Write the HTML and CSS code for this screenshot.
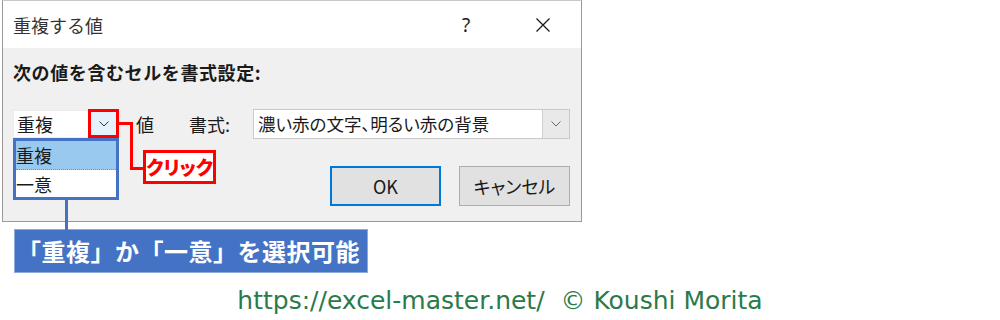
FILE: index.html
```html
<!DOCTYPE html>
<html lang="ja">
<head>
<meta charset="utf-8">
<title>重複する値</title>
<link rel="stylesheet" href="styles.css">
</head>
<body>
<div class="page">
  <div class="dialog">
    <div class="titlebar">
      <span class="title">重複する値</span>
      <span class="help">?</span>
      <span class="close">
        <svg width="16" height="16" viewBox="0 0 16 16"><path d="M1.5 1.5 L14.5 14.5 M14.5 1.5 L1.5 14.5" stroke="#1a1a1a" stroke-width="1.3" fill="none"/></svg>
      </span>
    </div>
    <div class="content">
      <div class="heading">次の値を含むセルを書式設定:</div>
      <div class="row">
        <div class="combo">
          <span class="combo-text">重複</span>
          <span class="combo-btn">
            <svg width="10" height="6" viewBox="0 0 10 6"><path d="M0.5 0.5 L5 5 L9.5 0.5" stroke="#333" stroke-width="1" fill="none"/></svg>
          </span>
        </div>
        <span class="lbl-val">値</span>
        <span class="lbl-fmt">書式:</span>
        <div class="fmt-combo">
          <span class="fmt-text">濃い赤の文字、明るい赤の背景</span>
          <span class="fmt-btn">
            <svg width="10" height="6" viewBox="0 0 10 6"><path d="M0.5 0.5 L5 5 L9.5 0.5" stroke="#666" stroke-width="1" fill="none"/></svg>
          </span>
        </div>
      </div>
      <div class="buttons">
        <button class="btn btn-ok">OK</button>
        <button class="btn">キャンセル</button>
      </div>
    </div>
  </div>

  <div class="callout">「重複」か「一意」を選択可能</div>

  <div class="footer">https://excel-master.net/&nbsp; © Koushi Morita</div>

  <!-- annotations over the dialog -->
  <div class="droplist">
    <div class="item item-sel">重複</div>
    <div class="item">一意</div>
  </div>
  <div class="redbox"></div>
  <div class="red-h1"></div>
  <div class="red-v"></div>
  <div class="red-h2"></div>
  <div class="click-tag">クリック</div>
  <div class="blue-v"></div>
</div>
</body>
</html>
```

FILE: styles.css
```css
html, body {
  margin: 0;
  padding: 0;
  background: #ffffff;
}
body {
  width: 1000px;
  height: 320px;
  overflow: hidden;
  font-family: "Noto Sans CJK JP", "Noto Sans", sans-serif;
}
.page {
  position: relative;
  width: 1000px;
  height: 320px;
}
.dialog {
  margin-left: 2px;
  width: 580px;
  height: 222px;
  box-sizing: border-box;
  border: 1px solid #9a9a9a;
  border-top-color: #c8c8c8;
  display: flex;
  flex-direction: column;
  background: #f0f0f0;
}
.titlebar {
  height: 47px;
  background: #ffffff;
  display: flex;
  align-items: center;
  padding-left: 10px;
  padding-right: 15px;
  color: #1a1a1a;
}
.title {
  font-size: 18px;
  color: #333;
}
.help {
  margin-left: auto;
  width: 40px;
  text-align: center;
  font-family: "Noto Sans", sans-serif;
  font-size: 19px;
  color: #1a1a1a;
}
.close {
  margin-left: 34px;
  width: 46px;
  display: flex;
  justify-content: center;
  align-items: center;
}
.content {
  flex: 1;
  padding: 14px 11px 0 10px;
}
.heading {
  font-size: 18px;
  font-weight: bold;
  line-height: 20px;
  letter-spacing: 0.6px;
  color: #1a1a1a;
}
.row {
  margin-top: 27px;
  height: 29px;
  display: flex;
  align-items: center;
  font-size: 18px;
  color: #1a1a1a;
}
.combo {
  width: 107px;
  height: 28px;
  box-sizing: border-box;
  background: #ffffff;
  border: 1px solid #ececec;
  display: flex;
  align-items: center;
}
.combo-text {
  padding-left: 3px;
  line-height: 26px;
}
.combo-btn {
  margin-left: auto;
  width: 30px;
  height: 26px;
  background: #e5f1fb;
  display: flex;
  align-items: center;
  justify-content: center;
}
.lbl-val {
  margin-left: 16px;
}
.lbl-fmt {
  margin-left: 35px;
}
.fmt-combo {
  margin-left: auto;
  width: 317px;
  height: 30px;
  box-sizing: border-box;
  background: #ffffff;
  border: 1px solid #c9c9c9;
  display: flex;
  align-items: center;
}
.fmt-text {
  padding-left: 4px;
  font-size: 17.5px;
  font-feature-settings: "palt";
}
.fmt-btn {
  margin-left: auto;
  width: 27px;
  height: 28px;
  box-sizing: border-box;
  background: #e9e9e9;
  border-left: 1px solid #d0d0d0;
  display: flex;
  align-items: center;
  justify-content: center;
}
.buttons {
  margin-top: 28px;
  display: flex;
  justify-content: flex-end;
  gap: 18px;
}
.btn {
  width: 111px;
  height: 40px;
  box-sizing: border-box;
  background: #e1e1e1;
  border: 1px solid #adadad;
  font-family: "Noto Sans CJK JP", "Noto Sans", sans-serif;
  font-size: 18px;
  color: #1a1a1a;
  padding: 0;
  font-feature-settings: "palt";
}
.btn-ok {
  border: 2px solid #0078d7;
}
.callout {
  margin-top: 7px;
  margin-left: 14px;
  width: 354px;
  height: 44px;
  box-sizing: border-box;
  background: #4472c4;
  border: 1px solid #8fa9dc;
  color: #ffffff;
  font-size: 24px;
  font-weight: bold;
  line-height: 42px;
  padding-left: 2px;
  letter-spacing: 0.5px;
  white-space: nowrap;
}
.footer {
  margin-top: 14px;
  text-align: center;
  font-family: "DejaVu Sans", sans-serif;
  font-size: 25px;
  line-height: 28px;
  color: #2b7a4b;
}

/* annotations */
.droplist {
  position: absolute;
  left: 13px;
  top: 138px;
  width: 106px;
  height: 62px;
  box-sizing: border-box;
  border: 3px solid #4472c4;
  background: #ffffff;
  font-size: 18px;
  color: #1a1a1a;
}
.item {
  height: 28px;
  line-height: 28px;
  padding-left: 0;
}
.item-sel {
  background: #99c9ef;
  border-bottom: 1px dotted #7a8ea0;
}
.redbox {
  position: absolute;
  left: 88px;
  top: 109px;
  width: 31px;
  height: 29px;
  box-sizing: border-box;
  border: 3px solid #ff0000;
}
.red-h1 {
  position: absolute;
  left: 119px;
  top: 122px;
  width: 14px;
  height: 3px;
  background: #ff0000;
}
.red-v {
  position: absolute;
  left: 130px;
  top: 122px;
  width: 3px;
  height: 48px;
  background: #ff0000;
}
.red-h2 {
  position: absolute;
  left: 130px;
  top: 167px;
  width: 14px;
  height: 3px;
  background: #ff0000;
}
.click-tag {
  position: absolute;
  left: 143px;
  top: 150px;
  width: 73px;
  height: 34px;
  box-sizing: border-box;
  border: 3px solid #ff0000;
  background: #ffffff;
  color: #ff0000;
  font-size: 19px;
  font-weight: 900;
  line-height: 28px;
  text-align: center;
  font-feature-settings: "palt";
}
.blue-v {
  position: absolute;
  left: 65px;
  top: 200px;
  width: 3px;
  height: 30px;
  background: #4472c4;
}
```
